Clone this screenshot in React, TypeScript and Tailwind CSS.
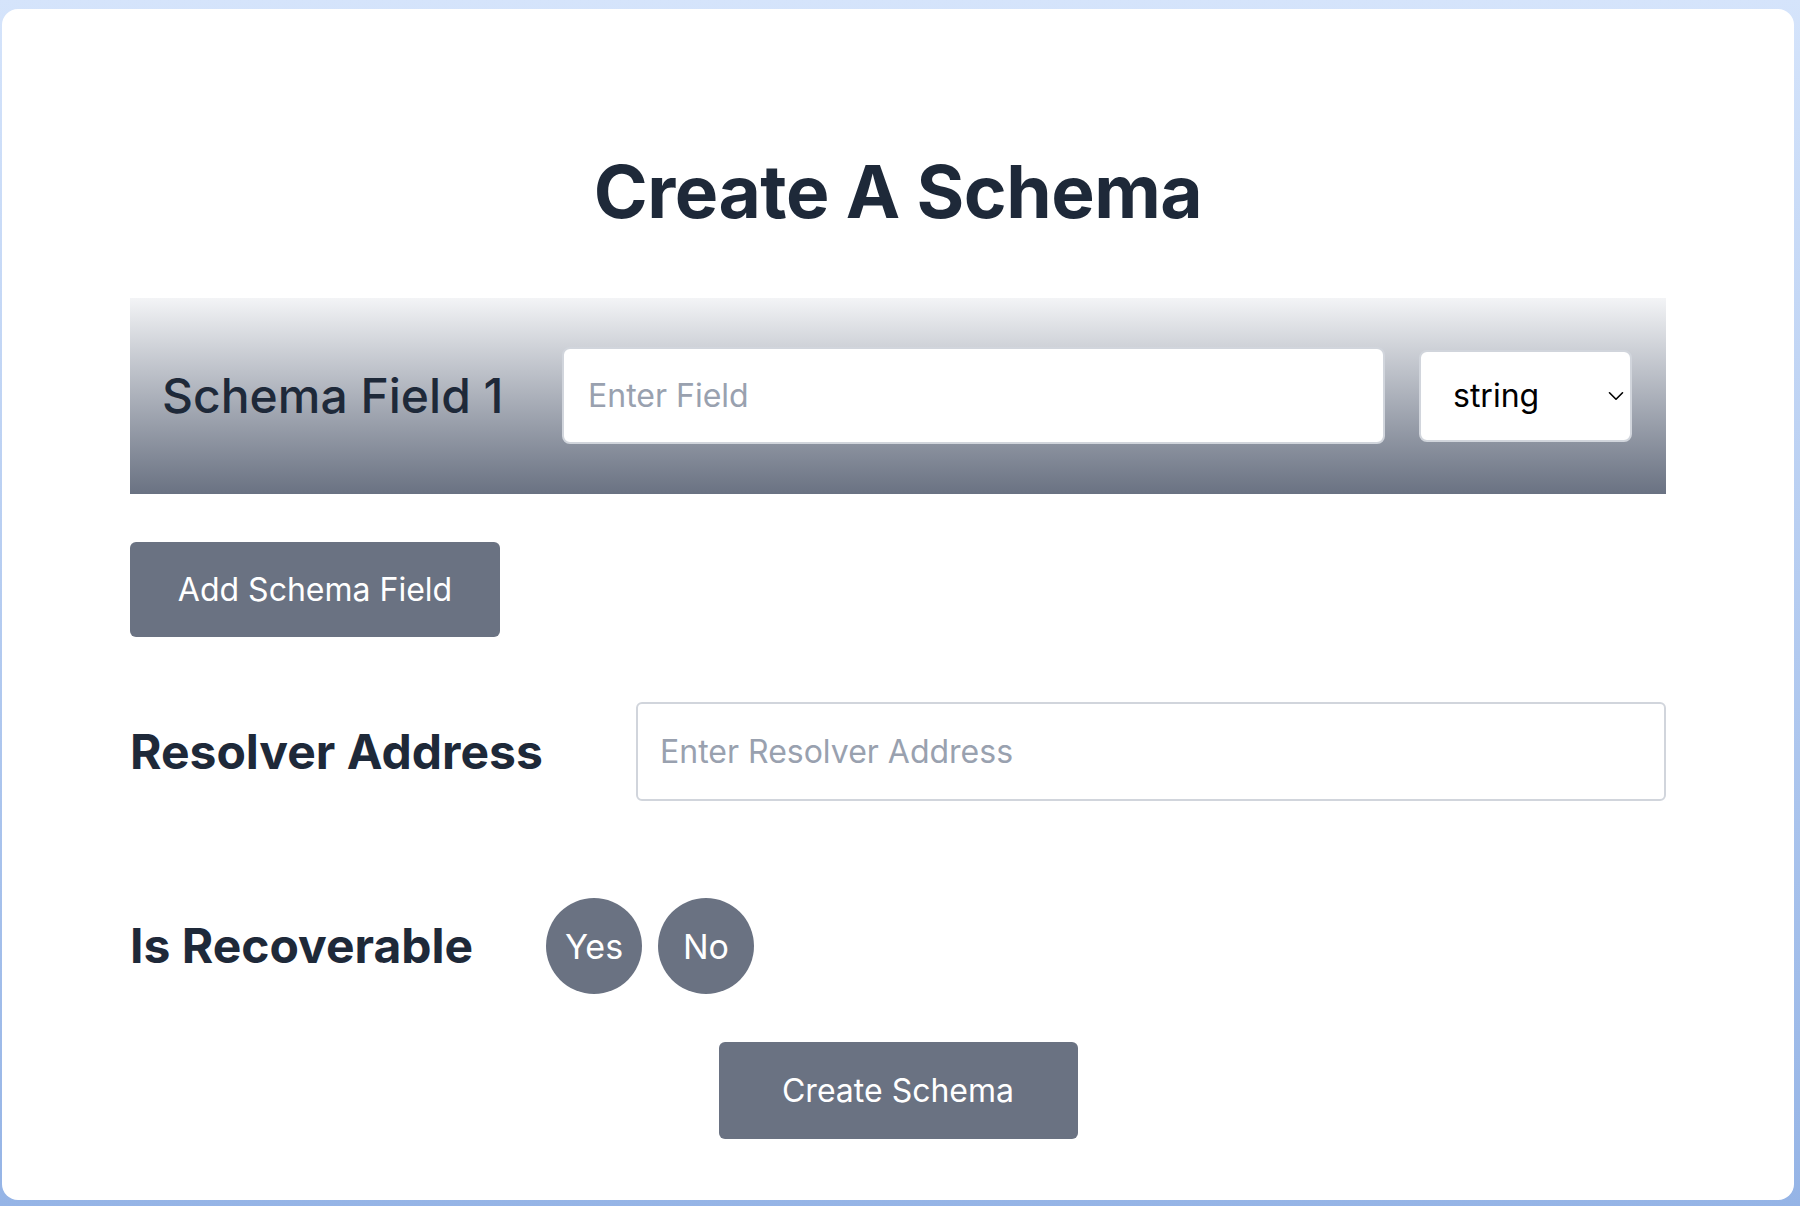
import React from 'react';
import { ChevronDown } from 'lucide-react';

const App: React.FC = () => {
  return (
    <div
      className="w-[1800px] h-[1206px] bg-gradient-to-b from-[#d5e4fb] to-[#95b4e6] pt-[9px] pl-[2px]"
      style={{ fontFamily: 'Inter, "Noto Sans", sans-serif' }}
    >
      <div className="w-[1792px] h-[1191px] bg-white rounded-2xl pt-[146px] px-[128px]">
        <h1 className="text-center text-[73px] leading-none font-bold text-gray-800 tracking-[-0.5px]">
          Create A Schema
        </h1>

        <div className="mt-[70px] h-[196px] bg-gradient-to-b from-gray-100 to-gray-500 flex items-center pl-8 pr-[34px]">
          <label className="w-[400px] shrink-0 text-[48px] font-medium text-gray-800 leading-none">
            Schema Field 1
          </label>
          <input
            type="text"
            placeholder="Enter Field"
            className="flex-1 h-[97px] -mt-[2px] bg-white rounded-lg border-2 border-gray-300 px-[24px] text-[32px] text-gray-800 placeholder:text-gray-400 outline-none"
          />
          <div className="relative ml-[34px] w-[213px] h-[92px]">
            <select className="w-full h-full appearance-none bg-white rounded-lg border-2 border-gray-300 pl-[32px] text-[32px] text-black outline-none">
              <option>string</option>
              <option>uint256</option>
              <option>address</option>
              <option>bool</option>
              <option>bytes32</option>
            </select>
            <ChevronDown
              size={26}
              strokeWidth={1.5}
              className="absolute right-[3px] top-1/2 -translate-y-1/2 text-black pointer-events-none"
            />
          </div>
        </div>

        <button className="mt-[48px] w-[370px] h-[95px] bg-gray-500 rounded-md text-white text-[32px]">
          Add Schema Field
        </button>

        <div className="mt-[65px] flex items-center">
          <label className="w-[506px] shrink-0 text-[48px] font-bold text-gray-800 leading-none">
            Resolver Address
          </label>
          <input
            type="text"
            placeholder="Enter Resolver Address"
            className="flex-1 h-[99px] bg-white rounded-md border-2 border-gray-300 px-[22px] text-[32px] text-gray-800 placeholder:text-gray-400 outline-none"
          />
        </div>

        <div className="mt-[97px] flex items-center">
          <label className="w-[416px] shrink-0 text-[48px] font-bold text-gray-800 leading-none">
            Is Recoverable
          </label>
          <div className="flex gap-4">
            <button className="w-[96px] h-[96px] rounded-full bg-gray-500 text-white text-[34px]">Yes</button>
            <button className="w-[96px] h-[96px] rounded-full bg-gray-500 text-white text-[34px]">No</button>
          </div>
        </div>

        <div className="mt-[48px] flex justify-center">
          <button className="w-[359px] h-[97px] bg-gray-500 rounded-md text-white text-[32px]">
            Create Schema
          </button>
        </div>
      </div>
    </div>
  );
};

export default App;
